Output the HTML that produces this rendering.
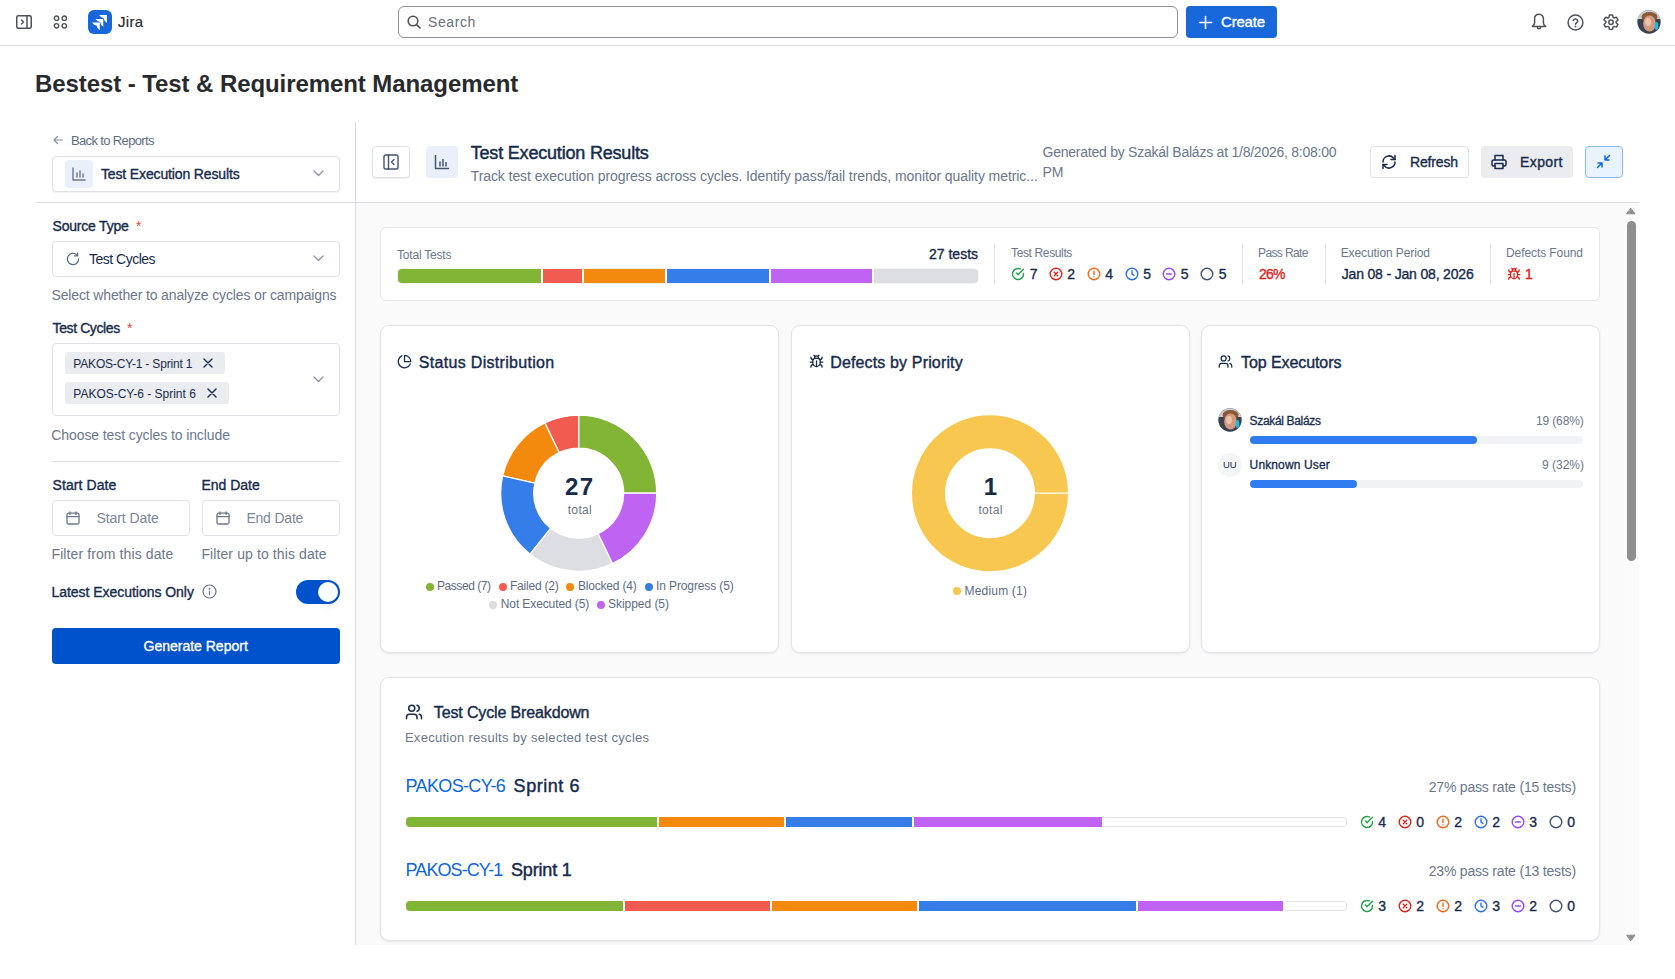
<!DOCTYPE html>
<html><head><meta charset="utf-8"><title>Bestest</title>
<style>
html,body{margin:0;padding:0;width:1675px;height:979px;overflow:hidden;background:#fff;font-family:"Liberation Sans", sans-serif;}
*{font-family:"Liberation Sans", sans-serif;}
</style></head><body>
<div style="position:absolute;left:0px;top:0px;width:1675px;height:46px;background:#fff;border-bottom:1px solid #DDDEE1;box-sizing:border-box"></div>
<svg style="position:absolute;left:16px;top:15px" width="16" height="14" viewBox="0 0 16 14" fill="none" stroke="#505258" stroke-width="1.5" stroke-linecap="round" stroke-linejoin="round" ><rect x="0.75" y="0.75" width="14.5" height="12.5" rx="1.5"/><path d="M11 1v12"/><path d="M5.5 5l2 2-2 2"/></svg>
<svg style="position:absolute;left:53px;top:15px" width="15" height="14" viewBox="0 0 15 14" fill="none" stroke="#505258" stroke-width="1.4" stroke-linecap="round" stroke-linejoin="round" ><circle cx="3.5" cy="3.2" r="2.2"/><circle cx="11.3" cy="3.2" r="2.2"/><circle cx="3.5" cy="10.8" r="2.2"/><circle cx="11.3" cy="10.8" r="2.2"/></svg>
<div style="position:absolute;left:88px;top:10px;width:24px;height:24px;border-radius:6px;background:#1868DB"></div>
<svg style="position:absolute;left:88px;top:10px" width="24" height="24" viewBox="0 0 24 24" fill="none" stroke="none" stroke-width="2" stroke-linecap="round" stroke-linejoin="round" ><path d="M11.10 5.10L18.90 5.10L18.90 12.90Q16.00 11.10 15.70 8.30Q12.90 8.00 11.10 5.10ZM7.50 8.90L15.30 8.90L15.30 16.70Q12.40 14.90 12.10 12.10Q9.30 11.80 7.50 8.90ZM4.00 12.40L11.80 12.40L11.80 20.20Q8.90 18.40 8.60 15.60Q5.80 15.30 4.00 12.40Z" fill="#fff" stroke="none"/></svg>
<div style="position:absolute;left:398px;top:6px;width:780px;height:32px;border:1px solid #8C8F97;border-radius:6px;box-sizing:border-box;background:#fff"></div>
<svg style="position:absolute;left:407px;top:15px" width="14" height="14" viewBox="0 0 14 14" fill="none" stroke="#505258" stroke-width="1.6" stroke-linecap="round" stroke-linejoin="round" ><circle cx="6" cy="6" r="4.8"/><path d="M9.6 9.6 13 13"/></svg>
<div style="position:absolute;left:1186px;top:6px;width:91px;height:32px;background:#1868DB;border-radius:4px"></div>
<svg style="position:absolute;left:1198px;top:15px" width="15" height="15" viewBox="0 0 15 15" fill="none" stroke="#fff" stroke-width="1.6" stroke-linecap="round" stroke-linejoin="round" ><path d="M7.5 1.5v12M1.5 7.5h12"/></svg>
<svg style="position:absolute;left:1531px;top:13px" width="16" height="18" viewBox="0 0 16 18" fill="none" stroke="#505258" stroke-width="1.5" stroke-linecap="round" stroke-linejoin="round" ><path d="M8 1.2C5.3 1.2 3.6 3.3 3.6 6V10C3.6 11.4 2.7 12.4 1.4 13.4H14.6C13.3 12.4 12.4 11.4 12.4 10V6C12.4 3.3 10.7 1.2 8 1.2Z"/><path d="M6.4 14.2a1.6 1.6 0 0 0 3.2 0"/></svg>
<svg style="position:absolute;left:1567px;top:14px" width="17" height="17" viewBox="0 0 17 17" fill="none" stroke="#505258" stroke-width="1.5" stroke-linecap="round" stroke-linejoin="round" ><circle cx="8.5" cy="8.5" r="7.4"/><path d="M6.3 6.5a2.25 2.25 0 0 1 4.4.7c0 1.5-2.2 1.8-2.2 3.1"/><circle cx="8.5" cy="12.5" r="0.9" fill="#505258" stroke="none"/></svg>
<svg style="position:absolute;left:1603px;top:13.6px" width="16" height="16.4" viewBox="0 0 16 16.4" fill="none" stroke="#505258" stroke-width="1.5" stroke-linecap="round" stroke-linejoin="round" ><path d="M10.12 3.45L9.53 1.01L6.47 1.01L5.88 3.45L4.94 3.99L2.54 3.28L1.01 5.93L2.83 7.66L2.83 8.74L1.01 10.47L2.54 13.12L4.94 12.41L5.88 12.95L6.47 15.39L9.53 15.39L10.12 12.95L11.06 12.41L13.46 13.12L14.99 10.47L13.17 8.74L13.17 7.66L14.99 5.93L13.46 3.28L11.06 3.99Z"/><circle cx="8" cy="8.2" r="2.2"/></svg>
<svg style="position:absolute;left:1637px;top:10px" width="24" height="24" viewBox="0 0 24 24" fill="none" stroke="none" stroke-width="2" stroke-linecap="round" stroke-linejoin="round" ><defs><clipPath id="avc1"><circle cx="12" cy="12" r="11.7"/></clipPath></defs><g clip-path="url(#avc1)"><rect width="24" height="24" fill="#3b4150"/><rect x="0" y="0" width="24" height="9" fill="#c9ccd2"/><ellipse cx="12.5" cy="7" rx="8" ry="5" fill="#8a5a36"/><ellipse cx="12.5" cy="13.5" rx="6.3" ry="8" fill="#d29a80"/><ellipse cx="11" cy="12" rx="3" ry="4" fill="#ecc3a8"/><ellipse cx="19.5" cy="16" rx="1.8" ry="4" fill="#22b8e0"/><path d="M2 20Q7 24 12 24Q18 24 22 20L22 24L2 24Z" fill="#2a2e3a"/></g></svg>
<div style="position:absolute;left:355px;top:122px;width:1px;height:823px;background:#DDDEE1"></div>
<div style="position:absolute;left:36px;top:202px;width:320px;height:1px;background:#DDDEE1"></div>
<svg style="position:absolute;left:53px;top:135px" width="10" height="10" viewBox="0 0 10 10" fill="none" stroke="#8590A2" stroke-width="1.2" stroke-linecap="round" stroke-linejoin="round" ><path d="M4.5 1.5 1 5 4.5 8.5M1.3 5h8"/></svg>
<div style="position:absolute;left:52px;top:156px;width:288px;height:36px;border:1px solid #DFE1E6;border-radius:4px;box-sizing:border-box;background:#fff;box-shadow:0 1px 1px rgba(9,30,66,0.06)"></div>
<div style="position:absolute;left:65px;top:160px;width:28px;height:28px;background:#E9F0FB;border-radius:4px"></div>
<svg style="position:absolute;left:72px;top:167px" width="14" height="14" viewBox="0 0 14 14" fill="none" stroke="#6B778C" stroke-width="1.4" stroke-linecap="round" stroke-linejoin="round" ><path d="M1 1v12h12"/><path d="M5 10V6M8 10V4M11 10V7"/></svg>
<svg style="position:absolute;left:313px;top:170px" width="11" height="7" viewBox="0 0 11 7" fill="none" stroke="#8993A4" stroke-width="1.3" stroke-linecap="round" stroke-linejoin="round" ><path d="M1 1l4.5 4.5L10 1"/></svg>
<div style="position:absolute;left:52px;top:241px;width:288px;height:36px;border:1px solid #DFE1E6;border-radius:4px;box-sizing:border-box;background:#fff"></div>
<svg style="position:absolute;left:66px;top:252px" width="14" height="14" viewBox="0 0 14 14" fill="none" stroke="#5E6C84" stroke-width="1.3" stroke-linecap="round" stroke-linejoin="round" ><path d="M12.6 7A5.6 5.6 0 1 1 10.9 3"/><path d="M11.6 0.9v2.9H8.7"/></svg>
<svg style="position:absolute;left:313px;top:255px" width="11" height="7" viewBox="0 0 11 7" fill="none" stroke="#8993A4" stroke-width="1.3" stroke-linecap="round" stroke-linejoin="round" ><path d="M1 1l4.5 4.5L10 1"/></svg>
<div style="position:absolute;left:52px;top:343px;width:288px;height:73px;border:1px solid #DFE1E6;border-radius:4px;box-sizing:border-box;background:#fff"></div>
<div style="position:absolute;left:65px;top:352px;width:160px;height:22px;background:#EBECF0;border-radius:3px"></div>
<svg style="position:absolute;left:203px;top:358px" width="10" height="10" viewBox="0 0 10 10" fill="none" stroke="#172B4D" stroke-width="1.4" stroke-linecap="round" stroke-linejoin="round" ><path d="M1 1l8 8M9 1 1 9"/></svg>
<div style="position:absolute;left:65px;top:382px;width:164px;height:22px;background:#EBECF0;border-radius:3px"></div>
<svg style="position:absolute;left:207px;top:388px" width="10" height="10" viewBox="0 0 10 10" fill="none" stroke="#172B4D" stroke-width="1.4" stroke-linecap="round" stroke-linejoin="round" ><path d="M1 1l8 8M9 1 1 9"/></svg>
<svg style="position:absolute;left:313px;top:376px" width="11" height="7" viewBox="0 0 11 7" fill="none" stroke="#8993A4" stroke-width="1.3" stroke-linecap="round" stroke-linejoin="round" ><path d="M1 1l4.5 4.5L10 1"/></svg>
<div style="position:absolute;left:52px;top:461px;width:288px;height:1px;background:#DFE1E6"></div>
<div style="position:absolute;left:52px;top:500px;width:138px;height:36px;border:1px solid #DFE1E6;border-radius:4px;box-sizing:border-box;background:#fff"></div>
<div style="position:absolute;left:202px;top:500px;width:138px;height:36px;border:1px solid #DFE1E6;border-radius:4px;box-sizing:border-box;background:#fff"></div>
<svg style="position:absolute;left:66px;top:511px" width="14" height="14" viewBox="0 0 14 14" fill="none" stroke="#6B778C" stroke-width="1.3" stroke-linecap="round" stroke-linejoin="round" ><rect x="1" y="2.2" width="12" height="10.8" rx="1.5"/><path d="M4 1v2.4M10 1v2.4M1 5.6h12"/></svg>
<svg style="position:absolute;left:216px;top:511px" width="14" height="14" viewBox="0 0 14 14" fill="none" stroke="#6B778C" stroke-width="1.3" stroke-linecap="round" stroke-linejoin="round" ><rect x="1" y="2.2" width="12" height="10.8" rx="1.5"/><path d="M4 1v2.4M10 1v2.4M1 5.6h12"/></svg>
<svg style="position:absolute;left:202px;top:584px" width="15" height="15" viewBox="0 0 15 15" fill="none" stroke="#6B778C" stroke-width="1.2" stroke-linecap="round" stroke-linejoin="round" ><circle cx="7.5" cy="7.5" r="6.5"/><path d="M7.5 7v3.6"/><circle cx="7.5" cy="4.7" r="0.4" fill="#6B778C"/></svg>
<div style="position:absolute;left:296px;top:580px;width:44px;height:24px;background:#0052CC;border-radius:12px"></div>
<div style="position:absolute;left:318px;top:582px;width:20px;height:20px;background:#fff;border-radius:50%;box-shadow:2px 5px 8px rgba(0,0,0,.06)"></div>
<div style="position:absolute;left:52px;top:628px;width:288px;height:36px;background:#0052CC;border-radius:4px"></div>
<div style="position:absolute;left:356px;top:203px;width:1283px;height:742px;background:#FAFAFA"></div>
<div style="position:absolute;left:356px;top:202px;width:1283px;height:1px;background:#DDDEE1"></div>
<div style="position:absolute;left:372px;top:146px;width:38px;height:32px;border:1px solid #DFE1E6;border-radius:4px;box-sizing:border-box;background:#fff;box-shadow:0 1px 1px rgba(9,30,66,.08)"></div>
<svg style="position:absolute;left:383px;top:154px" width="16" height="16" viewBox="0 0 16 16" fill="none" stroke="#44546F" stroke-width="1.4" stroke-linecap="round" stroke-linejoin="round" ><rect x="1" y="1" width="14" height="14" rx="1.5"/><path d="M5.5 1v14"/><path d="M11 5.5 8.5 8 11 10.5"/></svg>
<div style="position:absolute;left:426px;top:146px;width:32px;height:32px;background:#E9F0FB;border-radius:4px"></div>
<svg style="position:absolute;left:434px;top:154px" width="16" height="16" viewBox="0 0 16 16" fill="none" stroke="#44546F" stroke-width="1.5" stroke-linecap="round" stroke-linejoin="round" ><path d="M1.5 1.5v13h13"/><path d="M6 12V8M9 12V5.5M12 12V8.5"/></svg>
<div style="position:absolute;left:1370px;top:146px;width:99px;height:32px;border:1px solid #DFE1E6;border-radius:4px;box-sizing:border-box;background:#fff"></div>
<svg style="position:absolute;left:1381px;top:154px" width="16" height="16" viewBox="0 0 16 16" fill="none" stroke="#172B4D" stroke-width="1.5" stroke-linecap="round" stroke-linejoin="round" ><path d="M2 8a6 6 0 0 1 10.5-4L14 5.5"/><path d="M14 1.5v4h-4"/><path d="M14 8a6 6 0 0 1-10.5 4L2 10.5"/><path d="M2 14.5v-4h4"/></svg>
<div style="position:absolute;left:1481px;top:146px;width:92px;height:32px;background:#EBECF0;border-radius:4px"></div>
<svg style="position:absolute;left:1491px;top:154px" width="16" height="16" viewBox="0 0 16 16" fill="none" stroke="#172B4D" stroke-width="1.5" stroke-linecap="round" stroke-linejoin="round" ><path d="M4 6V1.5h8V6"/><path d="M4 12H2.5A1.5 1.5 0 0 1 1 10.5V7.5A1.5 1.5 0 0 1 2.5 6h11A1.5 1.5 0 0 1 15 7.5v3a1.5 1.5 0 0 1-1.5 1.5H12"/><rect x="4" y="9.5" width="8" height="5"/></svg>
<div style="position:absolute;left:1585px;top:146px;width:38px;height:32px;border:1px solid #85B8FF;border-radius:4px;box-sizing:border-box;background:#E9F2FF"></div>
<svg style="position:absolute;left:1596px;top:154px" width="15" height="15" viewBox="0 0 15 15" fill="none" stroke="#0C66E4" stroke-width="1.5" stroke-linecap="round" stroke-linejoin="round" ><path d="M2 9h4v4M13 6H9V2M9 6l4.5-4.5M6 9l-4.5 4.5"/></svg>
<div style="position:absolute;left:1624px;top:203px;width:15px;height:742px;background:#FBFBFB"></div>
<div style="position:absolute;left:1627px;top:221px;width:9px;height:340px;background:#8E8E8E;border-radius:5px"></div>
<svg style="position:absolute;left:1626px;top:207px" width="10" height="8" viewBox="0 0 10 8" fill="none" stroke="#8E8E8E" stroke-width="1" stroke-linecap="round" stroke-linejoin="round" ><path d="M5 1.5 9 6.8H1z" fill="#8E8E8E"/></svg>
<svg style="position:absolute;left:1626px;top:934px" width="10" height="8" viewBox="0 0 10 8" fill="none" stroke="#8E8E8E" stroke-width="1" stroke-linecap="round" stroke-linejoin="round" ><path d="M5 6.5 9 1.2H1z" fill="#8E8E8E"/></svg>
<div style="position:absolute;left:380px;top:227px;width:1220px;height:74px;background:#fff;border:1px solid #E4E5E9;border-radius:6px;box-sizing:border-box"></div>
<div style="position:absolute;left:397.5px;top:269px;width:580.5px;height:14px;border-radius:4px;overflow:hidden;display:flex;background:#fff;box-shadow:0 0 0 0.5px rgba(9,30,66,0.12)"><div style="width:25.0%;height:100%;background:#82B536;border-right:2px solid #fff;box-sizing:border-box"></div><div style="width:7.142857142857142%;height:100%;background:#F15B50;border-right:2px solid #fff;box-sizing:border-box"></div><div style="width:14.285714285714285%;height:100%;background:#F38A0E;border-right:2px solid #fff;box-sizing:border-box"></div><div style="width:17.857142857142858%;height:100%;background:#357DE8;border-right:2px solid #fff;box-sizing:border-box"></div><div style="width:17.857142857142858%;height:100%;background:#BF63F3;border-right:2px solid #fff;box-sizing:border-box"></div><div style="width:17.857142857142858%;height:100%;background:#DDDEE1;border-right:0px solid #fff;box-sizing:border-box"></div></div>
<div style="position:absolute;left:994px;top:244px;width:1px;height:40px;background:#DFE1E6"></div>
<svg style="position:absolute;left:1010.5px;top:266.5px" width="14" height="14" viewBox="0 0 14 14" fill="none" stroke="#22A34A" stroke-width="1.4" stroke-linecap="round" stroke-linejoin="round" ><path d="M12.5 6.4V7A5.5 5.5 0 1 1 9.24 1.97"/><path d="M12.5 2.2 7 7.7 5.4 6.1"/></svg>
<svg style="position:absolute;left:1048.5px;top:266.5px" width="14" height="14" viewBox="0 0 14 14" fill="none" stroke="#E2231A" stroke-width="1.4" stroke-linecap="round" stroke-linejoin="round" ><circle cx="7" cy="7" r="5.8"/><path d="M5.3 5.3l3.4 3.4M8.7 5.3 5.3 8.7"/></svg>
<svg style="position:absolute;left:1086.5px;top:266.5px" width="14" height="14" viewBox="0 0 14 14" fill="none" stroke="#F06A1A" stroke-width="1.4" stroke-linecap="round" stroke-linejoin="round" ><circle cx="7" cy="7" r="5.8"/><path d="M7 4.3v3.3M7 9.7v.1"/></svg>
<svg style="position:absolute;left:1124.5px;top:266.5px" width="14" height="14" viewBox="0 0 14 14" fill="none" stroke="#2F6FEB" stroke-width="1.4" stroke-linecap="round" stroke-linejoin="round" ><circle cx="7" cy="7" r="5.8"/><path d="M7 4v3.2l2 1.2"/></svg>
<svg style="position:absolute;left:1161.5px;top:266.5px" width="14" height="14" viewBox="0 0 14 14" fill="none" stroke="#9747FF" stroke-width="1.4" stroke-linecap="round" stroke-linejoin="round" ><circle cx="7" cy="7" r="5.8"/><path d="M4.6 7h4.8"/></svg>
<svg style="position:absolute;left:1200.0px;top:266.5px" width="14" height="14" viewBox="0 0 14 14" fill="none" stroke="#44546F" stroke-width="1.4" stroke-linecap="round" stroke-linejoin="round" ><circle cx="7" cy="7" r="5.8"/></svg>
<div style="position:absolute;left:1242px;top:244px;width:1px;height:40px;background:#DFE1E6"></div>
<div style="position:absolute;left:1325px;top:244px;width:1px;height:40px;background:#DFE1E6"></div>
<div style="position:absolute;left:1490px;top:244px;width:1px;height:40px;background:#DFE1E6"></div>
<svg style="position:absolute;left:1506.5px;top:266.5px" width="14" height="14" viewBox="0 0 24 24" fill="none" stroke="#E2231A" stroke-width="2.2" stroke-linecap="round" stroke-linejoin="round" ><path d="m8 2 1.88 1.88"/><path d="M14.12 3.88 16 2"/><path d="M9 7.13v-1a3.003 3.003 0 1 1 6 0v1"/><path d="M12 20c-3.3 0-6-2.7-6-6v-3a4 4 0 0 1 4-4h4a4 4 0 0 1 4 4v3c0 3.3-2.7 6-6 6"/><path d="M12 20v-9"/><path d="M6.53 9C4.6 8.8 3 7.1 3 5"/><path d="M6 13H2"/><path d="M3 21c0-2.1 1.7-3.9 3.8-4"/><path d="M20.97 5c0 2.1-1.6 3.8-3.5 4"/><path d="M22 13h-4"/><path d="M17.2 17c2.1.1 3.8 1.9 3.8 4"/></svg>
<div style="position:absolute;left:380px;top:325px;width:399px;height:328px;background:#fff;border:1px solid #E4E5E9;border-radius:9px;box-sizing:border-box;box-shadow:0 1px 2px rgba(9,30,66,0.08)"></div>
<div style="position:absolute;left:791px;top:325px;width:399px;height:328px;background:#fff;border:1px solid #E4E5E9;border-radius:9px;box-sizing:border-box;box-shadow:0 1px 2px rgba(9,30,66,0.08)"></div>
<div style="position:absolute;left:1201px;top:325px;width:399px;height:328px;background:#fff;border:1px solid #E4E5E9;border-radius:9px;box-sizing:border-box;box-shadow:0 1px 2px rgba(9,30,66,0.08)"></div>
<svg style="position:absolute;left:397px;top:354px" width="15" height="15" viewBox="0 0 24 24" fill="none" stroke="#172B4D" stroke-width="2" stroke-linecap="round" stroke-linejoin="round" ><path d="M21.21 15.89A10 10 0 1 1 8 2.83"/><path d="M22 12A10 10 0 0 0 12 2v10z"/></svg>
<svg style="position:absolute;left:808.5px;top:354px" width="15" height="15" viewBox="0 0 24 24" fill="none" stroke="#172B4D" stroke-width="2" stroke-linecap="round" stroke-linejoin="round" ><path d="m8 2 1.88 1.88"/><path d="M14.12 3.88 16 2"/><path d="M9 7.13v-1a3.003 3.003 0 1 1 6 0v1"/><path d="M12 20c-3.3 0-6-2.7-6-6v-3a4 4 0 0 1 4-4h4a4 4 0 0 1 4 4v3c0 3.3-2.7 6-6 6"/><path d="M12 20v-9"/><path d="M6.53 9C4.6 8.8 3 7.1 3 5"/><path d="M6 13H2"/><path d="M3 21c0-2.1 1.7-3.9 3.8-4"/><path d="M20.97 5c0 2.1-1.6 3.8-3.5 4"/><path d="M22 13h-4"/><path d="M17.2 17c2.1.1 3.8 1.9 3.8 4"/></svg>
<svg style="position:absolute;left:1218px;top:354px" width="15" height="15" viewBox="0 0 24 24" fill="none" stroke="#172B4D" stroke-width="2" stroke-linecap="round" stroke-linejoin="round" ><path d="M16 21v-2a4 4 0 0 0-4-4H6a4 4 0 0 0-4 4v2"/><circle cx="9" cy="7" r="4"/><path d="M22 21v-2a4 4 0 0 0-3-3.87"/><path d="M16 3.13a4 4 0 0 1 0 7.75"/></svg>
<svg style="position:absolute;left:0;top:0" width="1675" height="979"><path d="M656.70 493.20A78 78 0 0 0 578.70 415.20L578.70 448.20A45 45 0 0 1 623.70 493.20Z" fill="#82B536" stroke="#fff" stroke-width="1.2"/><path d="M578.70 415.20A78 78 0 0 0 544.86 422.92L559.18 452.66A45 45 0 0 1 578.70 448.20Z" fill="#F15B50" stroke="#fff" stroke-width="1.2"/><path d="M544.86 422.92A78 78 0 0 0 502.66 475.84L534.83 483.19A45 45 0 0 1 559.18 452.66Z" fill="#F38A0E" stroke="#fff" stroke-width="1.2"/><path d="M502.66 475.84A78 78 0 0 0 530.07 554.18L550.64 528.38A45 45 0 0 1 534.83 483.19Z" fill="#357DE8" stroke="#fff" stroke-width="1.2"/><path d="M530.07 554.18A78 78 0 0 0 612.54 563.48L598.22 533.74A45 45 0 0 1 550.64 528.38Z" fill="#DDDEE1" stroke="#fff" stroke-width="1.2"/><path d="M612.54 563.48A78 78 0 0 0 656.70 493.20L623.70 493.20A45 45 0 0 1 598.22 533.74Z" fill="#BF63F3" stroke="#fff" stroke-width="1.2"/><circle cx="990" cy="493.2" r="61.5" fill="none" stroke="#F8C74F" stroke-width="33"/><path d="M1035.00 493.20L1068.00 493.20" stroke="#fff" stroke-width="1.2"/></svg>
<div style="position:absolute;left:426px;top:583px;width:8px;height:8px;background:#82B536;border-radius:50%"></div>
<div style="position:absolute;left:499px;top:583px;width:8px;height:8px;background:#F15B50;border-radius:50%"></div>
<div style="position:absolute;left:566px;top:583px;width:8px;height:8px;background:#F38A0E;border-radius:50%"></div>
<div style="position:absolute;left:645px;top:583px;width:8px;height:8px;background:#357DE8;border-radius:50%"></div>
<div style="position:absolute;left:489px;top:600.5px;width:8px;height:8px;background:#DDDEE1;border-radius:50%"></div>
<div style="position:absolute;left:597px;top:600.5px;width:8px;height:8px;background:#BF63F3;border-radius:50%"></div>
<div style="position:absolute;left:953px;top:587px;width:8px;height:8px;background:#F8C74F;border-radius:50%"></div>
<svg style="position:absolute;left:1218px;top:408px" width="24" height="24" viewBox="0 0 24 24" fill="none" stroke="none" stroke-width="2" stroke-linecap="round" stroke-linejoin="round" ><defs><clipPath id="avc2"><circle cx="12" cy="12" r="11.7"/></clipPath></defs><g clip-path="url(#avc2)"><rect width="24" height="24" fill="#3b4150"/><rect x="0" y="0" width="24" height="9" fill="#c9ccd2"/><ellipse cx="12.5" cy="7" rx="8" ry="5" fill="#8a5a36"/><ellipse cx="12.5" cy="13.5" rx="6.3" ry="8" fill="#d29a80"/><ellipse cx="11" cy="12" rx="3" ry="4" fill="#ecc3a8"/><ellipse cx="19.5" cy="16" rx="1.8" ry="4" fill="#22b8e0"/><path d="M2 20Q7 24 12 24Q18 24 22 20L22 24L2 24Z" fill="#2a2e3a"/></g></svg>
<div style="position:absolute;left:1250px;top:436px;width:333px;height:8px;background:#F1F2F4;border-radius:4px"></div>
<div style="position:absolute;left:1250px;top:436px;width:227px;height:8px;background:#2F7BF0;border-radius:4px"></div>
<div style="position:absolute;left:1218px;top:452.5px;width:24px;height:24px;background:#F4F5F7;border-radius:50%"></div>
<div style="position:absolute;left:1250px;top:480px;width:333px;height:8px;background:#F1F2F4;border-radius:4px"></div>
<div style="position:absolute;left:1250px;top:480px;width:107px;height:8px;background:#2F7BF0;border-radius:4px"></div>
<div style="position:absolute;left:380px;top:677px;width:1220px;height:264px;background:#fff;border:1px solid #E4E5E9;border-radius:9px;box-sizing:border-box;box-shadow:0 1px 2px rgba(9,30,66,0.08)"></div>
<svg style="position:absolute;left:405px;top:703px" width="18" height="18" viewBox="0 0 24 24" fill="none" stroke="#172B4D" stroke-width="2" stroke-linecap="round" stroke-linejoin="round" ><path d="M16 21v-2a4 4 0 0 0-4-4H6a4 4 0 0 0-4 4v2"/><circle cx="9" cy="7" r="4"/><path d="M22 21v-2a4 4 0 0 0-3-3.87"/><path d="M16 3.13a4 4 0 0 1 0 7.75"/></svg>
<div style="position:absolute;left:405.6px;top:817px;width:941.8px;height:10px;border-radius:4px;overflow:hidden;display:flex;background:#fff;box-shadow:inset 0 0 0 1px #E4E5E9"><div style="width:251.14666666666665px;height:100%;background:#82B536;border-right:2px solid #fff;flex:none"></div><div style="width:125.57333333333332px;height:100%;background:#F38A0E;border-right:2px solid #fff;flex:none"></div><div style="width:125.57333333333332px;height:100%;background:#357DE8;border-right:2px solid #fff;flex:none"></div><div style="width:188.36px;height:100%;background:#BF63F3;border-right:2px solid #fff;flex:none"></div></div>
<div style="position:absolute;left:405.6px;top:901px;width:941.8px;height:10px;border-radius:4px;overflow:hidden;display:flex;background:#fff;box-shadow:inset 0 0 0 1px #E4E5E9"><div style="width:217.33846153846153px;height:100%;background:#82B536;border-right:2px solid #fff;flex:none"></div><div style="width:144.8923076923077px;height:100%;background:#F15B50;border-right:2px solid #fff;flex:none"></div><div style="width:144.8923076923077px;height:100%;background:#F38A0E;border-right:2px solid #fff;flex:none"></div><div style="width:217.33846153846153px;height:100%;background:#357DE8;border-right:2px solid #fff;flex:none"></div><div style="width:144.8923076923077px;height:100%;background:#BF63F3;border-right:2px solid #fff;flex:none"></div></div>
<svg style="position:absolute;left:1359.5px;top:814.9px" width="14" height="14" viewBox="0 0 14 14" fill="none" stroke="#22A34A" stroke-width="1.4" stroke-linecap="round" stroke-linejoin="round" ><path d="M12.5 6.4V7A5.5 5.5 0 1 1 9.24 1.97"/><path d="M12.5 2.2 7 7.7 5.4 6.1"/></svg>
<svg style="position:absolute;left:1397.5px;top:814.9px" width="14" height="14" viewBox="0 0 14 14" fill="none" stroke="#E2231A" stroke-width="1.4" stroke-linecap="round" stroke-linejoin="round" ><circle cx="7" cy="7" r="5.8"/><path d="M5.3 5.3l3.4 3.4M8.7 5.3 5.3 8.7"/></svg>
<svg style="position:absolute;left:1436.0px;top:814.9px" width="14" height="14" viewBox="0 0 14 14" fill="none" stroke="#F06A1A" stroke-width="1.4" stroke-linecap="round" stroke-linejoin="round" ><circle cx="7" cy="7" r="5.8"/><path d="M7 4.3v3.3M7 9.7v.1"/></svg>
<svg style="position:absolute;left:1473.5px;top:814.9px" width="14" height="14" viewBox="0 0 14 14" fill="none" stroke="#2F6FEB" stroke-width="1.4" stroke-linecap="round" stroke-linejoin="round" ><circle cx="7" cy="7" r="5.8"/><path d="M7 4v3.2l2 1.2"/></svg>
<svg style="position:absolute;left:1511.0px;top:814.9px" width="14" height="14" viewBox="0 0 14 14" fill="none" stroke="#9747FF" stroke-width="1.4" stroke-linecap="round" stroke-linejoin="round" ><circle cx="7" cy="7" r="5.8"/><path d="M4.6 7h4.8"/></svg>
<svg style="position:absolute;left:1548.9px;top:814.9px" width="14" height="14" viewBox="0 0 14 14" fill="none" stroke="#44546F" stroke-width="1.4" stroke-linecap="round" stroke-linejoin="round" ><circle cx="7" cy="7" r="5.8"/></svg>
<svg style="position:absolute;left:1359.5px;top:898.9px" width="14" height="14" viewBox="0 0 14 14" fill="none" stroke="#22A34A" stroke-width="1.4" stroke-linecap="round" stroke-linejoin="round" ><path d="M12.5 6.4V7A5.5 5.5 0 1 1 9.24 1.97"/><path d="M12.5 2.2 7 7.7 5.4 6.1"/></svg>
<svg style="position:absolute;left:1397.5px;top:898.9px" width="14" height="14" viewBox="0 0 14 14" fill="none" stroke="#E2231A" stroke-width="1.4" stroke-linecap="round" stroke-linejoin="round" ><circle cx="7" cy="7" r="5.8"/><path d="M5.3 5.3l3.4 3.4M8.7 5.3 5.3 8.7"/></svg>
<svg style="position:absolute;left:1436.0px;top:898.9px" width="14" height="14" viewBox="0 0 14 14" fill="none" stroke="#F06A1A" stroke-width="1.4" stroke-linecap="round" stroke-linejoin="round" ><circle cx="7" cy="7" r="5.8"/><path d="M7 4.3v3.3M7 9.7v.1"/></svg>
<svg style="position:absolute;left:1473.5px;top:898.9px" width="14" height="14" viewBox="0 0 14 14" fill="none" stroke="#2F6FEB" stroke-width="1.4" stroke-linecap="round" stroke-linejoin="round" ><circle cx="7" cy="7" r="5.8"/><path d="M7 4v3.2l2 1.2"/></svg>
<svg style="position:absolute;left:1511.0px;top:898.9px" width="14" height="14" viewBox="0 0 14 14" fill="none" stroke="#9747FF" stroke-width="1.4" stroke-linecap="round" stroke-linejoin="round" ><circle cx="7" cy="7" r="5.8"/><path d="M4.6 7h4.8"/></svg>
<svg style="position:absolute;left:1548.9px;top:898.9px" width="14" height="14" viewBox="0 0 14 14" fill="none" stroke="#44546F" stroke-width="1.4" stroke-linecap="round" stroke-linejoin="round" ><circle cx="7" cy="7" r="5.8"/></svg>
<div id="jira" style="position:absolute;left:118.00px;top:11.30px;line-height:21px;font-size:15px;font-weight:400;color:#292A2E;letter-spacing:0.333px;white-space:nowrap;-webkit-text-stroke:0.18px #292A2E;">Jira</div>
<div id="search" style="position:absolute;left:428.00px;top:12.15px;line-height:20px;font-size:14px;font-weight:400;color:#6B6E76;letter-spacing:0.600px;white-space:nowrap;">Search</div>
<div id="create" style="position:absolute;left:1221.00px;top:11.20px;line-height:21px;font-size:15px;font-weight:400;color:#fff;letter-spacing:-0.200px;white-space:nowrap;-webkit-text-stroke:0.38px #fff;">Create</div>
<div id="title" style="position:absolute;left:35.00px;top:66.68px;line-height:34px;font-size:24px;font-weight:700;color:#292A2E;letter-spacing:-0.079px;white-space:nowrap;">Bestest - Test &amp; Requirement Management</div>
<div id="back" style="position:absolute;left:71.00px;top:131.50px;line-height:18px;font-size:13px;font-weight:400;color:#5E6C84;letter-spacing:-0.643px;white-space:nowrap;">Back to Reports</div>
<div id="ter" style="position:absolute;left:101.00px;top:164.15px;line-height:20px;font-size:14px;font-weight:400;color:#172B4D;letter-spacing:-0.142px;white-space:nowrap;-webkit-text-stroke:0.35px #172B4D;">Test Execution Results</div>
<div id="srctype" style="position:absolute;left:52.50px;top:216.15px;line-height:20px;font-size:14px;font-weight:400;color:#172B4D;letter-spacing:-0.200px;white-space:nowrap;-webkit-text-stroke:0.35px #172B4D;">Source Type</div>
<div id="ast1" style="position:absolute;left:136.00px;top:216.15px;line-height:20px;font-size:14px;font-weight:400;color:#E2483D;letter-spacing:0.000px;white-space:nowrap;">*</div>
<div id="tc" style="position:absolute;left:89.00px;top:249.15px;line-height:20px;font-size:14px;font-weight:400;color:#172B4D;letter-spacing:-0.500px;white-space:nowrap;">Test Cycles</div>
<div id="selwh" style="position:absolute;left:51.50px;top:284.95px;line-height:20px;font-size:14px;font-weight:400;color:#6B778C;letter-spacing:-0.136px;white-space:nowrap;">Select whether to analyze cycles or campaigns</div>
<div id="tclabel" style="position:absolute;left:52.60px;top:318.35px;line-height:20px;font-size:14px;font-weight:400;color:#172B4D;letter-spacing:-0.400px;white-space:nowrap;-webkit-text-stroke:0.35px #172B4D;">Test Cycles</div>
<div id="ast2" style="position:absolute;left:127.00px;top:318.35px;line-height:20px;font-size:14px;font-weight:400;color:#E2483D;letter-spacing:0.000px;white-space:nowrap;">*</div>
<div id="chip1" style="position:absolute;left:73.30px;top:355.84px;line-height:17px;font-size:12px;font-weight:400;color:#172B4D;letter-spacing:-0.180px;white-space:nowrap;">PAKOS-CY-1 - Sprint 1</div>
<div id="chip2" style="position:absolute;left:73.30px;top:385.84px;line-height:17px;font-size:12px;font-weight:400;color:#172B4D;letter-spacing:-0.010px;white-space:nowrap;">PAKOS-CY-6 - Sprint 6</div>
<div id="choose" style="position:absolute;left:51.30px;top:425.15px;line-height:20px;font-size:14px;font-weight:400;color:#6B778C;letter-spacing:-0.095px;white-space:nowrap;">Choose test cycles to include</div>
<div id="sdlabel" style="position:absolute;left:52.50px;top:475.15px;line-height:20px;font-size:14px;font-weight:400;color:#172B4D;letter-spacing:0.085px;white-space:nowrap;-webkit-text-stroke:0.35px #172B4D;">Start Date</div>
<div id="edlabel" style="position:absolute;left:201.40px;top:475.15px;line-height:20px;font-size:14px;font-weight:400;color:#172B4D;letter-spacing:0.000px;white-space:nowrap;-webkit-text-stroke:0.35px #172B4D;">End Date</div>
<div id="sdph" style="position:absolute;left:96.40px;top:507.75px;line-height:20px;font-size:14px;font-weight:400;color:#7A869A;letter-spacing:-0.063px;white-space:nowrap;">Start Date</div>
<div id="edph" style="position:absolute;left:246.40px;top:507.75px;line-height:20px;font-size:14px;font-weight:400;color:#7A869A;letter-spacing:-0.199px;white-space:nowrap;">End Date</div>
<div id="ffrom" style="position:absolute;left:51.50px;top:544.15px;line-height:20px;font-size:14px;font-weight:400;color:#6B778C;letter-spacing:0.100px;white-space:nowrap;">Filter from this date</div>
<div id="fupto" style="position:absolute;left:201.40px;top:544.15px;line-height:20px;font-size:14px;font-weight:400;color:#6B778C;letter-spacing:0.107px;white-space:nowrap;">Filter up to this date</div>
<div id="latest" style="position:absolute;left:51.50px;top:582.15px;line-height:20px;font-size:14px;font-weight:400;color:#172B4D;letter-spacing:-0.036px;white-space:nowrap;-webkit-text-stroke:0.35px #172B4D;">Latest Executions Only</div>
<div id="gen" style="position:absolute;left:143.50px;top:636.15px;line-height:20px;font-size:14px;font-weight:400;color:#fff;letter-spacing:0.000px;white-space:nowrap;-webkit-text-stroke:0.35px #fff;">Generate Report</div>
<div id="h_ter" style="position:absolute;left:470.70px;top:140.96px;line-height:25px;font-size:18px;font-weight:400;color:#172B4D;letter-spacing:-0.190px;white-space:nowrap;-webkit-text-stroke:0.45px #172B4D;">Test Execution Results</div>
<div id="h_desc" style="position:absolute;left:470.70px;top:166.15px;line-height:20px;font-size:14px;font-weight:400;color:#6B778C;letter-spacing:-0.077px;white-space:nowrap;">Track test execution progress across cycles. Identify pass/fail trends, monitor quality metric...</div>
<div id="h_gen" style="position:absolute;left:1042.50px;top:142.05px;line-height:20px;font-size:14px;font-weight:400;color:#6B778C;letter-spacing:-0.239px;white-space:nowrap;">Generated by Szakál Balázs at 1/8/2026, 8:08:00</div>
<div id="h_pm" style="position:absolute;left:1042.50px;top:162.15px;line-height:20px;font-size:14px;font-weight:400;color:#6B778C;letter-spacing:0.000px;white-space:nowrap;">PM</div>
<div id="refresh" style="position:absolute;left:1410.00px;top:151.75px;line-height:20px;font-size:14px;font-weight:400;color:#172B4D;letter-spacing:-0.167px;white-space:nowrap;-webkit-text-stroke:0.35px #172B4D;">Refresh</div>
<div id="export" style="position:absolute;left:1520.00px;top:151.75px;line-height:20px;font-size:14px;font-weight:400;color:#172B4D;letter-spacing:0.400px;white-space:nowrap;-webkit-text-stroke:0.35px #172B4D;">Export</div>
<div id="tt" style="position:absolute;left:397.00px;top:247.34px;line-height:17px;font-size:12px;font-weight:400;color:#6B778C;letter-spacing:-0.200px;white-space:nowrap;">Total Tests</div>
<div id="tt27" style="position:absolute;left:929.00px;top:243.85px;line-height:20px;font-size:14px;font-weight:400;color:#172B4D;letter-spacing:0.000px;white-space:nowrap;-webkit-text-stroke:0.35px #172B4D;">27 tests</div>
<div id="tr" style="position:absolute;left:1011.00px;top:245.34px;line-height:17px;font-size:12px;font-weight:400;color:#6B778C;letter-spacing:-0.364px;white-space:nowrap;">Test Results</div>
<div id="sr_check" style="position:absolute;left:1029.80px;top:263.95px;line-height:20px;font-size:14px;font-weight:400;color:#172B4D;letter-spacing:0.000px;white-space:nowrap;-webkit-text-stroke:0.35px #172B4D;">7</div>
<div id="sr_x" style="position:absolute;left:1067.30px;top:263.95px;line-height:20px;font-size:14px;font-weight:400;color:#172B4D;letter-spacing:0.000px;white-space:nowrap;-webkit-text-stroke:0.35px #172B4D;">2</div>
<div id="sr_warn" style="position:absolute;left:1105.30px;top:263.95px;line-height:20px;font-size:14px;font-weight:400;color:#172B4D;letter-spacing:0.000px;white-space:nowrap;-webkit-text-stroke:0.35px #172B4D;">4</div>
<div id="sr_clock" style="position:absolute;left:1143.30px;top:263.95px;line-height:20px;font-size:14px;font-weight:400;color:#172B4D;letter-spacing:0.000px;white-space:nowrap;-webkit-text-stroke:0.35px #172B4D;">5</div>
<div id="sr_minus" style="position:absolute;left:1180.80px;top:263.95px;line-height:20px;font-size:14px;font-weight:400;color:#172B4D;letter-spacing:0.000px;white-space:nowrap;-webkit-text-stroke:0.35px #172B4D;">5</div>
<div id="sr_circ" style="position:absolute;left:1218.80px;top:263.95px;line-height:20px;font-size:14px;font-weight:400;color:#172B4D;letter-spacing:0.000px;white-space:nowrap;-webkit-text-stroke:0.35px #172B4D;">5</div>
<div id="pr" style="position:absolute;left:1258.00px;top:245.34px;line-height:17px;font-size:12px;font-weight:400;color:#6B778C;letter-spacing:-0.625px;white-space:nowrap;">Pass Rate</div>
<div id="pr26" style="position:absolute;left:1259.00px;top:263.95px;line-height:20px;font-size:14px;font-weight:400;color:#E2231A;letter-spacing:-0.800px;white-space:nowrap;-webkit-text-stroke:0.35px #E2231A;">26%</div>
<div id="ep" style="position:absolute;left:1340.70px;top:245.34px;line-height:17px;font-size:12px;font-weight:400;color:#6B778C;letter-spacing:-0.094px;white-space:nowrap;">Execution Period</div>
<div id="epv" style="position:absolute;left:1341.70px;top:263.95px;line-height:20px;font-size:14px;font-weight:400;color:#172B4D;letter-spacing:-0.170px;white-space:nowrap;-webkit-text-stroke:0.35px #172B4D;">Jan 08 - Jan 08, 2026</div>
<div id="df" style="position:absolute;left:1506.00px;top:245.34px;line-height:17px;font-size:12px;font-weight:400;color:#6B778C;letter-spacing:-0.083px;white-space:nowrap;">Defects Found</div>
<div id="df1" style="position:absolute;left:1525.00px;top:263.95px;line-height:20px;font-size:14px;font-weight:400;color:#E2231A;letter-spacing:0.000px;white-space:nowrap;-webkit-text-stroke:0.35px #E2231A;">1</div>
<div id="sd" style="position:absolute;left:418.80px;top:352.06px;line-height:22px;font-size:16px;font-weight:400;color:#172B4D;letter-spacing:0.311px;white-space:nowrap;-webkit-text-stroke:0.40px #172B4D;">Status Distribution</div>
<div id="dbp" style="position:absolute;left:830.20px;top:352.06px;line-height:22px;font-size:16px;font-weight:400;color:#172B4D;letter-spacing:0.150px;white-space:nowrap;-webkit-text-stroke:0.40px #172B4D;">Defects by Priority</div>
<div id="te" style="position:absolute;left:1241.00px;top:352.06px;line-height:22px;font-size:16px;font-weight:400;color:#172B4D;letter-spacing:-0.083px;white-space:nowrap;-webkit-text-stroke:0.40px #172B4D;">Top Executors</div>
<div id="d27" style="position:absolute;left:565.00px;top:470.38px;line-height:34px;font-size:24px;font-weight:700;color:#172B4D;letter-spacing:1.400px;white-space:nowrap;">27</div>
<div id="d27t" style="position:absolute;left:567.70px;top:502.14px;line-height:17px;font-size:12px;font-weight:400;color:#6B778C;letter-spacing:0.350px;white-space:nowrap;">total</div>
<div id="d1" style="position:absolute;left:983.70px;top:470.38px;line-height:34px;font-size:24px;font-weight:700;color:#172B4D;letter-spacing:0.000px;white-space:nowrap;">1</div>
<div id="d1t" style="position:absolute;left:978.40px;top:502.14px;line-height:17px;font-size:12px;font-weight:400;color:#6B778C;letter-spacing:0.350px;white-space:nowrap;">total</div>
<div id="lg1" style="position:absolute;left:437.00px;top:578.24px;line-height:17px;font-size:12px;font-weight:400;color:#5E6C84;letter-spacing:-0.444px;white-space:nowrap;">Passed (7)</div>
<div id="lg2" style="position:absolute;left:510.00px;top:578.24px;line-height:17px;font-size:12px;font-weight:400;color:#5E6C84;letter-spacing:-0.222px;white-space:nowrap;">Failed (2)</div>
<div id="lg3" style="position:absolute;left:578.00px;top:578.24px;line-height:17px;font-size:12px;font-weight:400;color:#5E6C84;letter-spacing:-0.200px;white-space:nowrap;">Blocked (4)</div>
<div id="lg4" style="position:absolute;left:656.00px;top:578.24px;line-height:17px;font-size:12px;font-weight:400;color:#5E6C84;letter-spacing:-0.111px;white-space:nowrap;">In Progress (5)</div>
<div id="lg5" style="position:absolute;left:500.80px;top:596.24px;line-height:17px;font-size:12px;font-weight:400;color:#5E6C84;letter-spacing:-0.108px;white-space:nowrap;">Not Executed (5)</div>
<div id="lg6" style="position:absolute;left:608.00px;top:596.24px;line-height:17px;font-size:12px;font-weight:400;color:#5E6C84;letter-spacing:-0.040px;white-space:nowrap;">Skipped (5)</div>
<div id="lgm" style="position:absolute;left:964.60px;top:583.04px;line-height:17px;font-size:12px;font-weight:400;color:#5E6C84;letter-spacing:0.180px;white-space:nowrap;">Medium (1)</div>
<div id="ex1" style="position:absolute;left:1249.60px;top:413.04px;line-height:17px;font-size:12px;font-weight:400;color:#172B4D;letter-spacing:-0.334px;white-space:nowrap;-webkit-text-stroke:0.30px #172B4D;">Szakál Balázs</div>
<div id="ex1v" style="position:absolute;left:1536.00px;top:413.04px;line-height:17px;font-size:12px;font-weight:400;color:#6B778C;letter-spacing:-0.143px;white-space:nowrap;">19 (68%)</div>
<div id="uu" style="position:absolute;left:1223.00px;top:457.81px;line-height:13px;font-size:9.5px;font-weight:400;color:#172B4D;letter-spacing:0.000px;white-space:nowrap;">UU</div>
<div id="ex2" style="position:absolute;left:1249.60px;top:456.74px;line-height:17px;font-size:12px;font-weight:400;color:#172B4D;letter-spacing:0.126px;white-space:nowrap;-webkit-text-stroke:0.30px #172B4D;">Unknown User</div>
<div id="ex2v" style="position:absolute;left:1542.00px;top:456.74px;line-height:17px;font-size:12px;font-weight:400;color:#6B778C;letter-spacing:0.000px;white-space:nowrap;">9 (32%)</div>
<div id="tcb" style="position:absolute;left:433.80px;top:701.76px;line-height:22px;font-size:16px;font-weight:400;color:#172B4D;letter-spacing:-0.135px;white-space:nowrap;-webkit-text-stroke:0.40px #172B4D;">Test Cycle Breakdown</div>
<div id="tcbd" style="position:absolute;left:404.90px;top:728.80px;line-height:18px;font-size:13px;font-weight:400;color:#6B778C;letter-spacing:0.288px;white-space:nowrap;">Execution results by selected test cycles</div>
<div id="c6k" style="position:absolute;left:405.60px;top:774.46px;line-height:25px;font-size:18px;font-weight:400;color:#0C66E4;letter-spacing:-0.655px;white-space:nowrap;">PAKOS-CY-6</div>
<div id="c6n" style="position:absolute;left:513.60px;top:774.46px;line-height:25px;font-size:18px;font-weight:400;color:#172B4D;letter-spacing:0.540px;white-space:nowrap;-webkit-text-stroke:0.45px #172B4D;">Sprint 6</div>
<div id="c6r" style="position:absolute;left:1428.70px;top:776.85px;line-height:20px;font-size:14px;font-weight:400;color:#6B778C;letter-spacing:-0.190px;white-space:nowrap;">27% pass rate (15 tests)</div>
<div id="c1k" style="position:absolute;left:405.60px;top:858.36px;line-height:25px;font-size:18px;font-weight:400;color:#0C66E4;letter-spacing:-0.922px;white-space:nowrap;">PAKOS-CY-1</div>
<div id="c1n" style="position:absolute;left:511.00px;top:858.36px;line-height:25px;font-size:18px;font-weight:400;color:#172B4D;letter-spacing:-0.171px;white-space:nowrap;-webkit-text-stroke:0.45px #172B4D;">Sprint 1</div>
<div id="c1r" style="position:absolute;left:1428.70px;top:860.75px;line-height:20px;font-size:14px;font-weight:400;color:#6B778C;letter-spacing:-0.190px;white-space:nowrap;">23% pass rate (13 tests)</div>
<div id="r1_check" style="position:absolute;left:1378.30px;top:811.85px;line-height:20px;font-size:14px;font-weight:400;color:#172B4D;letter-spacing:0.000px;white-space:nowrap;-webkit-text-stroke:0.35px #172B4D;">4</div>
<div id="r1_x" style="position:absolute;left:1416.30px;top:811.85px;line-height:20px;font-size:14px;font-weight:400;color:#172B4D;letter-spacing:0.000px;white-space:nowrap;-webkit-text-stroke:0.35px #172B4D;">0</div>
<div id="r1_warn" style="position:absolute;left:1454.30px;top:811.85px;line-height:20px;font-size:14px;font-weight:400;color:#172B4D;letter-spacing:0.000px;white-space:nowrap;-webkit-text-stroke:0.35px #172B4D;">2</div>
<div id="r1_clock" style="position:absolute;left:1492.30px;top:811.85px;line-height:20px;font-size:14px;font-weight:400;color:#172B4D;letter-spacing:0.000px;white-space:nowrap;-webkit-text-stroke:0.35px #172B4D;">2</div>
<div id="r1_minus" style="position:absolute;left:1529.30px;top:811.85px;line-height:20px;font-size:14px;font-weight:400;color:#172B4D;letter-spacing:0.000px;white-space:nowrap;-webkit-text-stroke:0.35px #172B4D;">3</div>
<div id="r1_circ" style="position:absolute;left:1567.30px;top:811.85px;line-height:20px;font-size:14px;font-weight:400;color:#172B4D;letter-spacing:0.000px;white-space:nowrap;-webkit-text-stroke:0.35px #172B4D;">0</div>
<div id="r2_check" style="position:absolute;left:1378.30px;top:895.85px;line-height:20px;font-size:14px;font-weight:400;color:#172B4D;letter-spacing:0.000px;white-space:nowrap;-webkit-text-stroke:0.35px #172B4D;">3</div>
<div id="r2_x" style="position:absolute;left:1416.30px;top:895.85px;line-height:20px;font-size:14px;font-weight:400;color:#172B4D;letter-spacing:0.000px;white-space:nowrap;-webkit-text-stroke:0.35px #172B4D;">2</div>
<div id="r2_warn" style="position:absolute;left:1454.30px;top:895.85px;line-height:20px;font-size:14px;font-weight:400;color:#172B4D;letter-spacing:0.000px;white-space:nowrap;-webkit-text-stroke:0.35px #172B4D;">2</div>
<div id="r2_clock" style="position:absolute;left:1492.30px;top:895.85px;line-height:20px;font-size:14px;font-weight:400;color:#172B4D;letter-spacing:0.000px;white-space:nowrap;-webkit-text-stroke:0.35px #172B4D;">3</div>
<div id="r2_minus" style="position:absolute;left:1529.30px;top:895.85px;line-height:20px;font-size:14px;font-weight:400;color:#172B4D;letter-spacing:0.000px;white-space:nowrap;-webkit-text-stroke:0.35px #172B4D;">2</div>
<div id="r2_circ" style="position:absolute;left:1567.30px;top:895.85px;line-height:20px;font-size:14px;font-weight:400;color:#172B4D;letter-spacing:0.000px;white-space:nowrap;-webkit-text-stroke:0.35px #172B4D;">0</div>
</body></html>
